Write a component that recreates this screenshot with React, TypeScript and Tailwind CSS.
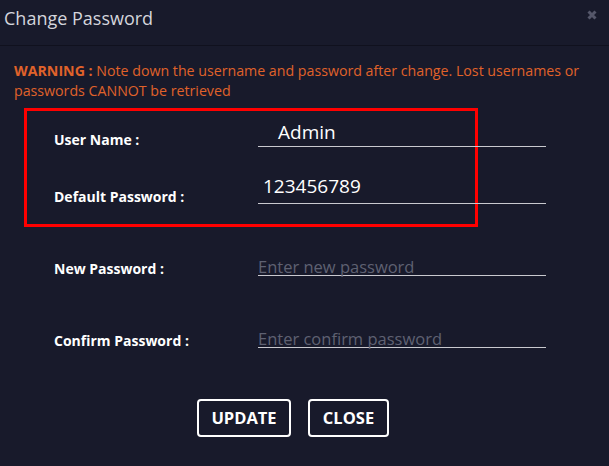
import React from 'react';

const font = { fontFamily: '"Open Sans", "Noto Sans", sans-serif' };

function Field({
  label,
  value,
  placeholder,
  indent = 0,
  className = '',
}: {
  label: string;
  value?: string;
  placeholder?: string;
  indent?: number;
  className?: string;
}) {
  return (
    <div className={`flex shrink-0 items-end h-[36px] w-[492px] ${className}`}>
      <div className="w-[204px] shrink-0 -mb-[3px] text-[14px] leading-[20px] font-bold text-white">{label}</div>
      <div className="w-[288px] shrink-0 h-full flex items-end border-b border-[#c9c9cf]">
        {value ? (
          <span className={`text-[19px] leading-[26px] text-white ${indent ? 'pl-[20px] pb-[1px]' : 'pl-[5px] pb-[4px]'}`}>
            {value}
          </span>
        ) : (
          <span className="text-[16.5px] leading-[20px] text-[#5f6172] -mb-[2px]">{placeholder}</span>
        )}
      </div>
    </div>
  );
}

export default function App() {
  return (
    <div className="w-[609px] h-[466px] bg-[#181a2b] overflow-hidden" style={font}>
      {/* Header */}
      <div className="h-[46px] flex items-center justify-between pl-[4px] pr-[12px] border-b border-[#10111e]">
        <span className="text-[18px] text-[#d4d5dc] -mt-[9px]">Change Password</span>
        <svg width="10" height="10" viewBox="0 0 10 10" className="-mt-[15px]">
          <path d="M1.5 1.5 L8.5 8.5 M8.5 1.5 L1.5 8.5" stroke="#55576a" strokeWidth="3" />
        </svg>
      </div>

      {/* Warning */}
      <p className="px-[14px] pt-[15px] text-[14.2px] leading-[20px] text-[#e0622a]">
        <span className="font-bold">WARNING :</span> Note down the username and password after change. Lost usernames or
        passwords CANNOT be retrieved
      </p>

      {/* Current credentials */}
      <div className="ml-[24px] mt-[7px] w-[454px] border-[3px] border-[#ff0000] pl-[27px] pb-[20px]">
        <Field label="User Name :" value="Admin" indent={1} />
        <Field label="Default Password :" value="123456789" className="mt-[21px]" />
      </div>

      <div className="pl-[54px]">
        <Field label="New Password :" placeholder="Enter new password" className="mt-[13px]" />
        <Field label="Confirm Password :" placeholder="Enter confirm password" className="mt-[36px]" />
      </div>

      {/* Actions */}
      <div className="flex gap-[17px] pl-[197px] mt-[51px]">
        <button className="w-[94px] h-[38px] border-2 border-white rounded-[4px] text-[16.5px] font-bold text-white">
          UPDATE
        </button>
        <button className="w-[81px] h-[38px] border-2 border-white rounded-[4px] text-[16.5px] font-bold text-white">
          CLOSE
        </button>
      </div>
    </div>
  );
}
